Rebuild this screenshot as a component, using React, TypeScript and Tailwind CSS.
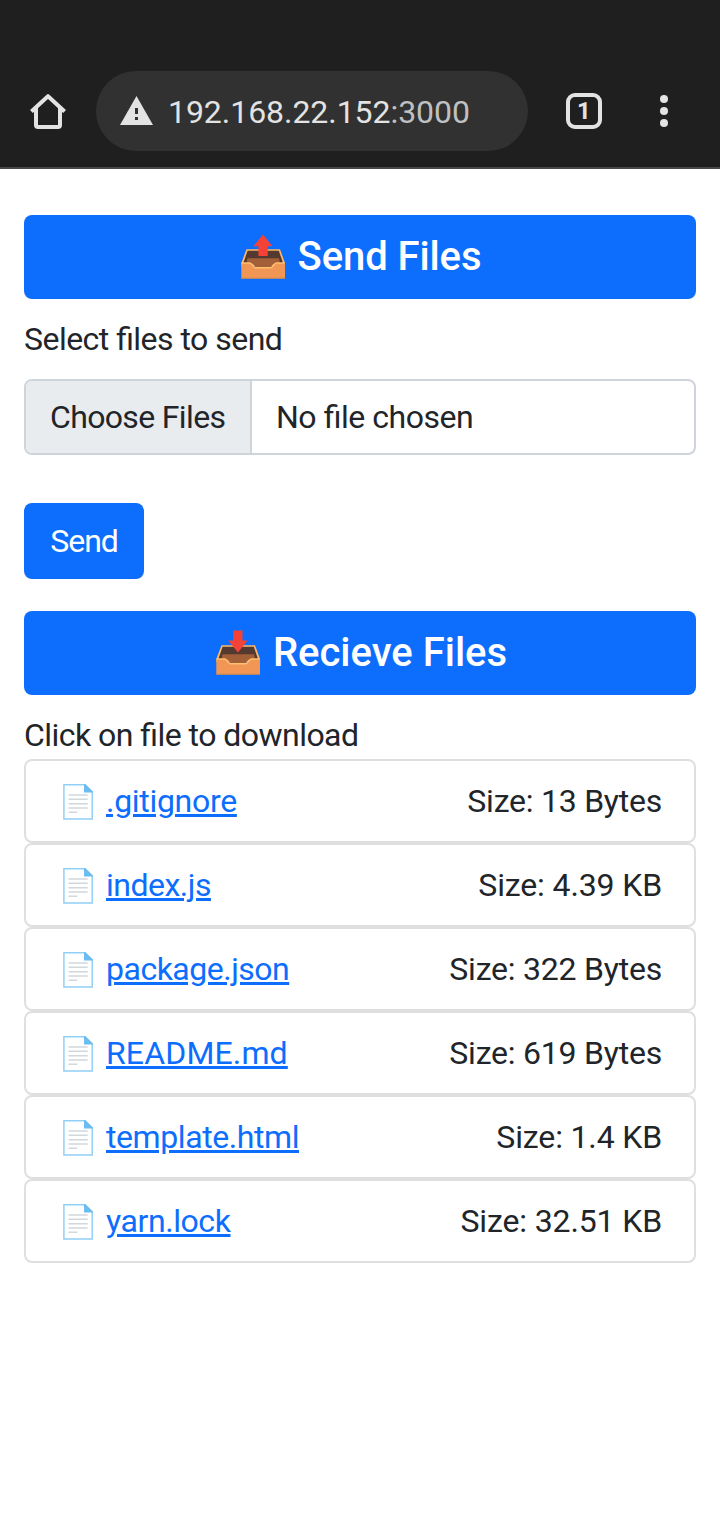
const files = [
  { name: ".gitignore", size: "13 Bytes", nameTracking: "tracking-[-0.3px]", sizeTracking: "tracking-[-0.24px]" },
  { name: "index.js", size: "4.39 KB", nameTracking: "tracking-[-0.5px]", sizeTracking: "tracking-[-0.13px]" },
  { name: "package.json", size: "322 Bytes", nameTracking: "tracking-[-0.5px]", sizeTracking: "tracking-[-0.22px]" },
  { name: "README.md", size: "619 Bytes", nameTracking: "tracking-[0.15px]", sizeTracking: "tracking-[-0.22px]" },
  { name: "template.html", size: "1.4 KB", nameTracking: "tracking-[-0.42px]", sizeTracking: "tracking-[-0.15px]" },
  { name: "yarn.lock", size: "32.51 KB", nameTracking: "tracking-[-0.42px]", sizeTracking: "tracking-[-0.13px]" },
];

function TrayIcon({ direction }: { direction: "up" | "down" }) {
  return (
    <svg width="46" height="46" viewBox="0 0 46 46" className="shrink-0">
      <path d="M6.500 15.300H40L45 29v3H1.300v-3z" fill="#ffb866" />
      <path d="M7.600 16.700H38.800L43.200 29.500H3.200z" fill="#543930" />
      <path d="M7.500 24.200H39l1.800 4.600-7 .600-4.600 5H17l-4.600-5H5.700z" fill="#a35f38" />
      <path d="M6.500 25.500L5.500 29M40 25.500L41 29" stroke="#543930" strokeWidth="1.500" />
      <path d="M1.300 29H9.800C12.500 29 12.500 33.700 15.800 33.700H30.300C33.500 33.700 33.500 29 36.500 29H45V44.700H1.300Z" fill="#f19654" />
      <path d="M1.600 29H9.800C12.500 29 12.500 33.700 15.800 33.700H30.300C33.500 33.700 33.500 29 36.500 29H44.700" fill="none" stroke="#ffbf70" strokeWidth="1.500" />
      <path d="M1.300 44.300H45" stroke="#b98460" strokeWidth=".8" />
      {direction === "up" ? (
        <path d="M23 .4L32.500 12.200H27.700V22H18.400V12.200H13.400Z" fill="#f44336" />
      ) : (
        <path d="M18.300 .6H27.500V10.500H32.500L23 22.600L13.200 10.500H18.300Z" fill="#f44336" />
      )}
    </svg>
  );
}

function FileIcon() {
  return (
    <svg width="32" height="38" viewBox="0 0 32 38" className="mt-px shrink-0">
      <path d="M1.900 1.700H23L30.200 8.800V36.100H1.900Z" fill="#fff" stroke="#90d0f8" strokeWidth="1.500" />
      <path d="M22 1H23L31 8.700V9.400H22Z" fill="#6bbcf0" />
      <path d="M6.500 12H25.700M6.500 16.300H25.700M6.500 20.700H25.700M6.500 25H25.700M6.500 29.300H15.300" stroke="#cfd8dc" strokeWidth="1.500" />
    </svg>
  );
}

function BrowserBar() {
  return (
    <header className="flex h-[169px] items-start border-b-2 border-[#474747] bg-[#1f1f1f] pt-[71px] text-[#e3e3e3]">
      <div className="flex h-20 w-24 items-center justify-center">
        <svg width="38" height="38" viewBox="0 0 38 38" fill="none" stroke="currentColor">
          <path d="M7 16V33Q7 35 9 35H29Q31 35 31 33V16" strokeWidth="4" />
          <path d="M2.400 19.400L19 4.200L35.600 19.400" strokeWidth="4" strokeLinejoin="round" />
        </svg>
      </div>
      <div className="flex h-20 w-[432px] items-center rounded-full bg-[#313131] pl-6">
        <svg width="33" height="29" viewBox="0 0 33 29" className="-mt-0.5">
          <path d="M16.500 0L33 29H0Z" fill="currentColor" />
          <path d="M15 12H18V18H15ZM15 21H18V24H15Z" fill="#313131" />
        </svg>
        <span className="ml-[15px] mt-px whitespace-nowrap text-[32px] tracking-[-0.05px]">
          192.168.22.152<span className="text-[#c0c0c0]">:3000</span>
        </span>
      </div>
      <div className="ml-[38px] mt-[22px] flex h-9 w-9 items-center justify-center rounded-[9px] border-4 border-[#e3e3e3] text-[24px] font-bold">
        1
      </div>
      <svg width="8" height="32" viewBox="0 0 8 32" fill="currentColor" className="ml-[58px] mt-6">
        <circle cx="4" cy="4" r="4" />
        <circle cx="4" cy="16" r="4" />
        <circle cx="4" cy="28" r="4" />
      </svg>
    </header>
  );
}

export default function App() {
  return (
    <div className="min-h-[1520px] w-[720px] bg-white font-[Roboto,sans-serif] text-[32px] leading-[48px] text-[#212529] [font-feature-settings:'liga'_1]">
      <BrowserBar />
      <main className="px-6 pt-[46px]">
        <h1 className="flex h-[84px] items-center justify-center gap-3 rounded-lg bg-[#0d6efd] pl-px text-[40px] font-medium text-white">
          <TrayIcon direction="up" />
          <span className="tracking-[-0.1px]">Send Files</span>
        </h1>
        <p className="mt-4 tracking-[-0.53px]">Select files to send</p>
        <div className="mt-4 flex h-[76px] overflow-hidden rounded-lg border-2 border-[#ced4da]">
          <button className="w-[226px] shrink-0 border-r-2 border-[#ced4da] bg-[#e9ecef] pl-6 text-left tracking-[-0.65px]">
            Choose Files
          </button>
          <span className="flex items-center pl-6 tracking-[-0.46px]">No file chosen</span>
        </div>
        <button className="mt-12 h-[76px] w-[120px] rounded-lg bg-[#0d6efd] tracking-[-1px] text-white">Send</button>
        <h1 className="mt-8 flex h-[84px] items-center justify-center gap-3 rounded-lg bg-[#0d6efd] pl-0.5 text-[40px] font-medium text-white">
          <TrayIcon direction="down" />
          <span>Recieve Files</span>
        </h1>
        <p className="mt-4 tracking-[-0.54px]">Click on file to download</p>
        <ul>
          {files.map((file) => (
            <li key={file.name} className="flex h-[84px] items-center rounded-lg border-2 border-[#dfdfdf] pl-9 pr-8">
              <FileIcon />
              <a href="#" className={`ml-3 text-[#0d6efd] underline ${file.nameTracking}`}>{file.name}</a>
              <span className={`ml-auto ${file.sizeTracking}`}>Size: {file.size}</span>
            </li>
          ))}
        </ul>
      </main>
    </div>
  );
}
